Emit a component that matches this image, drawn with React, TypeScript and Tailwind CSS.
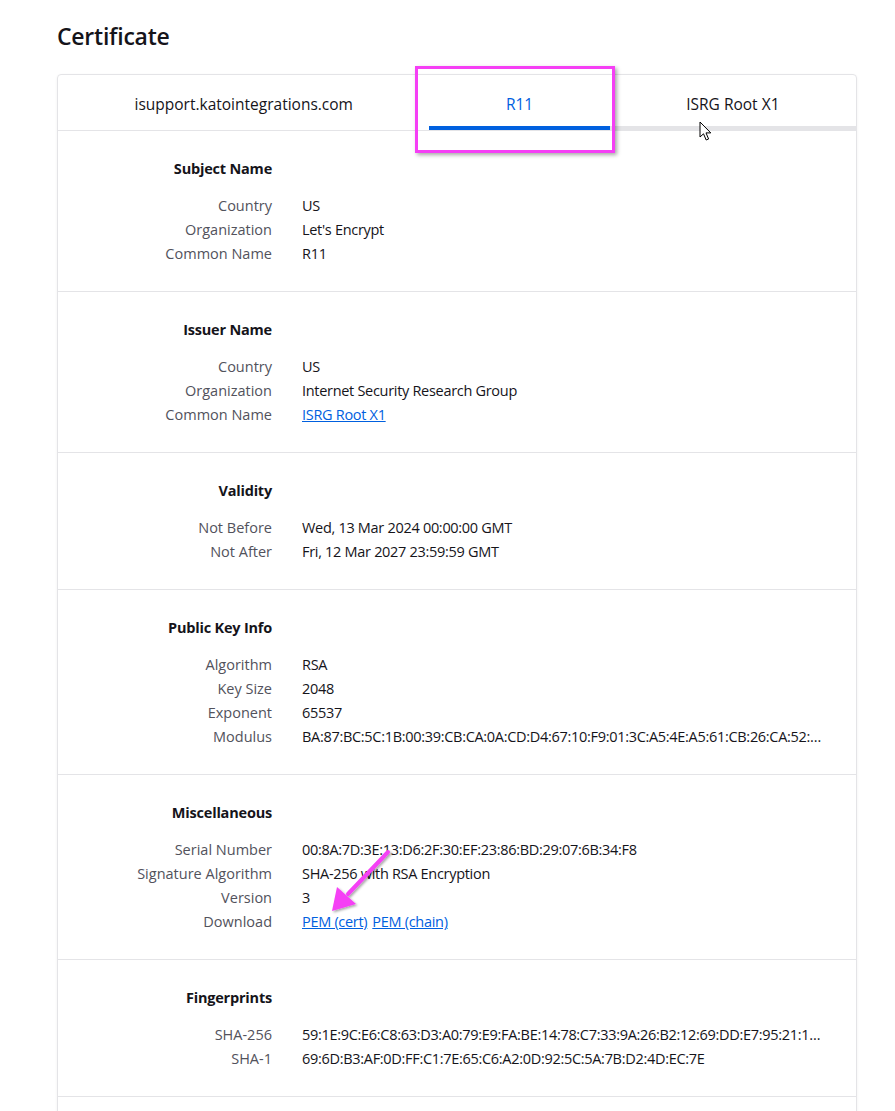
import React from "react";

type Row = { label: string; value: React.ReactNode };
type Section = { title: string; rows: Row[] };

const link = "text-[#0060df] underline";

const sections: Section[] = [
  {
    title: "Subject Name",
    rows: [
      { label: "Country", value: "US" },
      { label: "Organization", value: "Let's Encrypt" },
      { label: "Common Name", value: "R11" },
    ],
  },
  {
    title: "Issuer Name",
    rows: [
      { label: "Country", value: "US" },
      { label: "Organization", value: "Internet Security Research Group" },
      { label: "Common Name", value: <a className={link}>ISRG Root X1</a> },
    ],
  },
  {
    title: "Validity",
    rows: [
      { label: "Not Before", value: "Wed, 13 Mar 2024 00:00:00 GMT" },
      { label: "Not After", value: "Fri, 12 Mar 2027 23:59:59 GMT" },
    ],
  },
  {
    title: "Public Key Info",
    rows: [
      { label: "Algorithm", value: "RSA" },
      { label: "Key Size", value: "2048" },
      { label: "Exponent", value: "65537" },
      {
        label: "Modulus",
        value: "BA:87:BC:5C:1B:00:39:CB:CA:0A:CD:D4:67:10:F9:01:3C:A5:4E:A5:61:CB:26:CA:52:…",
      },
    ],
  },
  {
    title: "Miscellaneous",
    rows: [
      { label: "Serial Number", value: "00:8A:7D:3E:13:D6:2F:30:EF:23:86:BD:29:07:6B:34:F8" },
      { label: "Signature Algorithm", value: "SHA-256 with RSA Encryption" },
      { label: "Version", value: "3" },
      {
        label: "Download",
        value: (
          <span className="flex gap-[5px]">
            <a className={link}>PEM (cert)</a>
            <a className={link}>PEM (chain)</a>
          </span>
        ),
      },
    ],
  },
  {
    title: "Fingerprints",
    rows: [
      {
        label: "SHA-256",
        value: "59:1E:9C:E6:C8:63:D3:A0:79:E9:FA:BE:14:78:C7:33:9A:26:B2:12:69:DD:E7:95:21:1…",
      },
      { label: "SHA-1", value: "69:6D:B3:AF:0D:FF:C1:7E:65:C6:A2:0D:92:5C:5A:7B:D2:4D:EC:7E" },
    ],
  },
  {
    title: "Basic Constraints",
    rows: [{ label: "Certificate Authority", value: "Yes" }],
  },
];

function InfoSection({ s, last }: { s: Section; last: boolean }) {
  return (
    <div
      className={`grid grid-cols-[214px_1fr] gap-x-[30px] pr-[28px] pt-[26px] pb-[25px] ${
        last ? "" : "border-b border-[#e4e4e7]"
      }`}
    >
      <div className="text-right font-bold text-[#15141a] leading-[24px] mb-[13px] tracking-[-0.2px]">
        {s.title}
      </div>
      <div className="mb-[13px]" />
      {s.rows.map((r) => (
        <React.Fragment key={r.label}>
          <div className="text-right text-[#52525c] leading-[24px] whitespace-nowrap">{r.label}</div>
          <div className="text-[#15141a] leading-[24px] whitespace-nowrap overflow-hidden text-ellipsis min-w-0 tracking-[-0.3px]">
            {r.value}
          </div>
        </React.Fragment>
      ))}
    </div>
  );
}

export default function App() {
  return (
    <div
      className="relative bg-white min-h-[1111px] px-[57px] pt-[20px] text-[14.5px] text-[#15141a]"
      style={{ fontFamily: '"Open Sans", "Noto Sans", sans-serif' }}
    >
      <h1 className="text-[23px] font-semibold leading-[32px] text-[#15141a] tracking-[-0.01em]">Certificate</h1>

      <div className="mt-[22px] w-[800px] rounded-[4px] border border-[#e4e4e7] shadow-[0_1px_3px_rgba(0,0,0,0.06)]">
        <div className="flex h-[56px] border-b border-[#e4e4e7] text-[15.5px]">
          <div className="flex-auto flex items-center justify-center border-b-4 border-transparent pt-[8px]">
            isupport.katointegrations.com
          </div>
          <div className="flex-auto flex items-center justify-center border-b-4 border-[#0060df] text-[#0060df] pt-[8px]">
            R11
          </div>
          <div className="flex-auto flex items-center justify-center border-b-4 border-[#e4e4e7] pt-[8px]">
            ISRG Root X1
          </div>
        </div>
        <div>
          {sections.map((s, i) => (
            <InfoSection key={s.title} s={s} last={i === sections.length - 1} />
          ))}
        </div>
      </div>

      {/* annotation rectangle */}
      <div className="absolute left-[415px] top-[66px] w-[200px] h-[87px] border-[3px] border-[#f53ff5] shadow-[2px_2px_4px_rgba(0,0,0,0.35)] pointer-events-none" />

      {/* mouse cursor */}
      <svg className="absolute left-[699px] top-[121px]" width="14" height="22" viewBox="0 0 14 22">
        <path
          d="M1 1 L1 16 L4.5 12.8 L7.2 19 L9.6 18 L7 11.9 L11.8 11.9 Z"
          fill="#fff"
          stroke="#000"
          strokeWidth="1"
          strokeLinejoin="round"
        />
      </svg>

      {/* annotation arrow */}
      <svg className="absolute left-0 top-0 pointer-events-none" width="895" height="1111" viewBox="0 0 895 1111">
        <defs>
          <filter id="sh" x="-20%" y="-20%" width="140%" height="140%">
            <feDropShadow dx="1.5" dy="1.5" stdDeviation="1.2" floodColor="#000" floodOpacity="0.35" />
          </filter>
        </defs>
        <g filter="url(#sh)">
          <line x1="388" y1="852" x2="348" y2="894" stroke="#f53ff5" strokeWidth="4" strokeLinecap="round" />
          <polygon points="332,911 337,887 356,904" fill="#f53ff5" />
        </g>
      </svg>
    </div>
  );
}
